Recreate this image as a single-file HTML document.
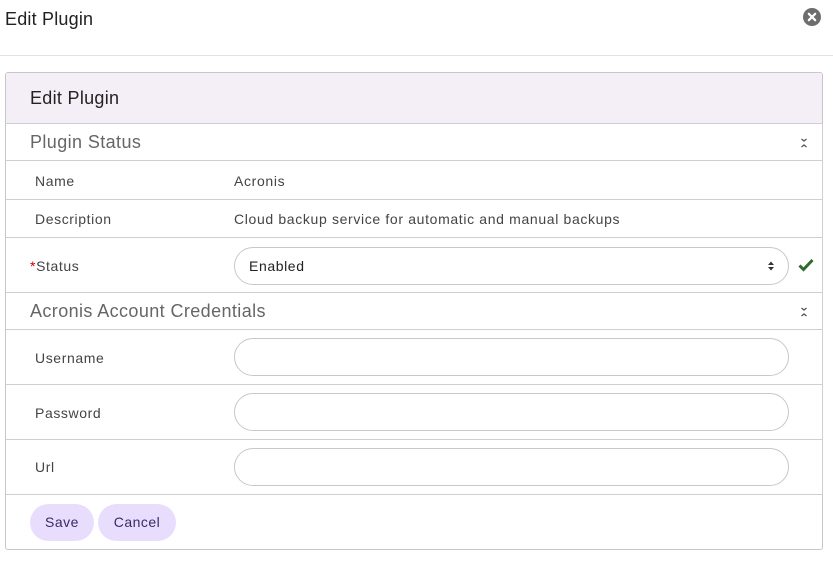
<!DOCTYPE html>
<html><head><style>
body{margin:0;width:833px;height:568px;background:#fff;font-family:"Liberation Sans",sans-serif;position:relative;overflow:hidden}
.a{position:absolute}
.line{position:absolute;left:6px;width:816px;height:1px;background:#d0cdd4}
.lbl{position:absolute;left:35px;font-size:14px;color:#444;letter-spacing:0.6px}
.sec{position:absolute;left:30px;font-size:18px;color:#666;letter-spacing:0.4px}
.inp{position:absolute;left:234px;width:553px;height:36px;border:1px solid #c8c8c8;border-radius:19px;background:#fff}
.chev{position:absolute;left:799px}
.btn{position:absolute;top:504px;height:37px;border-radius:19px;background:#e9ddfd;color:#3a2a66;font-size:14px;line-height:37px;text-align:center;letter-spacing:0.5px}
.v{font-size:14px;color:#444;letter-spacing:0.65px}
</style></head><body>
<div class="a" style="left:5px;top:9px;font-size:18px;color:#222;letter-spacing:0.2px">Edit Plugin</div>
<svg class="a" style="left:803px;top:8px" width="18" height="18" viewBox="0 0 18 18"><circle cx="9" cy="9" r="9" fill="#6e6e6e"/><path d="M5.8 5.8L12.2 12.2M12.2 5.8L5.8 12.2" stroke="#fff" stroke-width="2.2" stroke-linecap="round"/></svg>
<div class="a" style="left:0;top:55px;width:833px;height:1px;background:#e2e2e2"></div>
<div class="a" style="left:5px;top:72px;width:816px;height:476px;border:1px solid #c8c6cc;border-radius:3px"></div>
<div class="a" style="left:6px;top:73px;width:816px;height:50px;background:#f4eff7;border-radius:3px 3px 0 0"></div>
<div class="a" style="left:30px;top:88px;font-size:18px;color:#222;letter-spacing:0.3px">Edit Plugin</div>
<div class="line" style="top:123px"></div>
<div class="sec" style="top:132px">Plugin Status</div>
<svg class="chev" style="top:137px" width="10" height="12" viewBox="0 0 10 12"><path d="M2.5 2L5 4L7.5 2M2.5 10L5 8L7.5 10" stroke="#555" stroke-width="1.3" fill="none"/></svg>
<div class="line" style="top:160px"></div>
<div class="lbl" style="top:173px">Name</div>
<div class="a v" style="left:234px;top:173px">Acronis</div>
<div class="line" style="top:199px"></div>
<div class="lbl" style="top:211px">Description</div>
<div class="a v" style="left:234px;top:211px">Cloud backup service for automatic and manual backups</div>
<div class="line" style="top:237px"></div>
<div class="lbl" style="left:30px;top:258px"><span style="color:#c00">*</span>Status</div>
<div class="inp" style="top:247px"></div>
<div class="a" style="left:249px;top:258px;font-size:14px;color:#222;letter-spacing:0.6px">Enabled</div>
<svg class="a" style="left:767px;top:260px" width="8" height="12" viewBox="0 0 8 12"><path d="M1 5L4 1.5L7 5ZM1 7L4 10.5L7 7Z" fill="#333"/></svg>
<svg class="a" style="left:798px;top:258px" width="16" height="14" viewBox="0 0 16 14"><path d="M1.5 7.5L5.5 11.5L14.5 2" stroke="#2d6a2d" stroke-width="3" fill="none"/></svg>
<div class="line" style="top:292px"></div>
<div class="sec" style="top:301px">Acronis Account Credentials</div>
<svg class="chev" style="top:306px" width="10" height="12" viewBox="0 0 10 12"><path d="M2.5 2L5 4L7.5 2M2.5 10L5 8L7.5 10" stroke="#555" stroke-width="1.3" fill="none"/></svg>
<div class="line" style="top:329px"></div>
<div class="lbl" style="top:350px">Username</div>
<div class="inp" style="top:338px"></div>
<div class="line" style="top:384px"></div>
<div class="lbl" style="top:405px">Password</div>
<div class="inp" style="top:393px"></div>
<div class="line" style="top:439px"></div>
<div class="lbl" style="top:459px">Url</div>
<div class="inp" style="top:448px"></div>
<div class="line" style="top:494px"></div>
<div class="btn" style="left:30px;width:64px;top:504px">Save</div>
<div class="btn" style="left:98px;width:78px;top:504px">Cancel</div>
<div class="a" style="left:822px;top:123px;width:1px;height:371px;background:#d0cdd4"></div>
</body></html>
